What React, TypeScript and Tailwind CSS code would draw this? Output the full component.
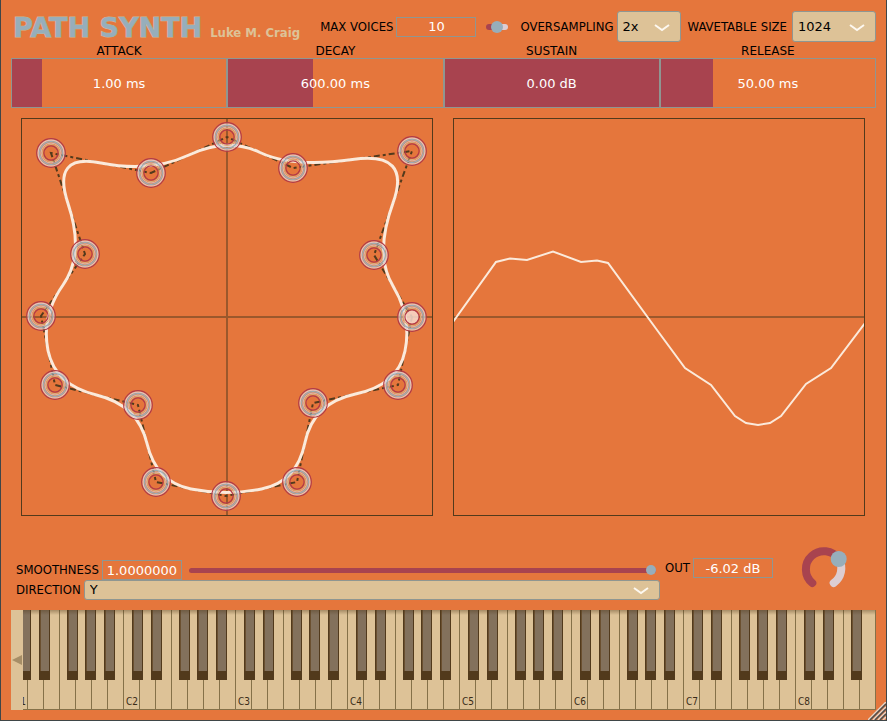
import React, { useState } from "react";
import type { ReactNode } from "react";

type Point = [number, number];

const NODES: Point[] = [
  [391, 199], [353, 137], [391, 33], [272, 50], [206, 19], [130, 55], [30, 35], [64, 136],
  [20, 198], [34, 267], [117, 287], [135, 364], [205, 378], [276, 364], [292, 285], [377, 267],
];

const WAVE =
  "0,204 43,144 57,140.500 74,142 100,133.500 128,144 144,142.500 155,145 204,212 232,250 258,267 282,298 293,305 305,307 317,305 328,298 353,266 378,250 412,205";

const mid = (a: Point, b: Point): Point => [(a[0] + b[0]) / 2, (a[1] + b[1]) / 2];

function smoothPath(points: Point[]) {
  const start = mid(points[points.length - 1], points[0]);
  const parts = points.map((p, i) => {
    const end = mid(p, points[(i + 1) % points.length]);
    return `Q${p[0]} ${p[1]} ${end[0]} ${end[1]}`;
  });
  return `M${start[0]} ${start[1]}${parts.join("")}Z`;
}

const LABEL = "whitespace-nowrap font-['DejaVu_Sans_Condensed','DejaVu_Sans',sans-serif] text-[13px] leading-4 text-black";
const FIELD = "h-5 w-20 shrink-0 border border-[#8f9691] bg-transparent text-center text-[13px] leading-4 text-white outline-none";

function Dropdown({ id, options, className }: { id: string; options: string[]; className: string }) {
  return (
    <div className={`relative ${className}`}>
      <select
        id={id}
        className="block h-full w-full appearance-none rounded-[3px] border border-[#8f9691] bg-[#ddc297] px-[5px] text-[13px] leading-4 text-black outline-none"
      >
        {options.map((o) => (
          <option key={o}>{o}</option>
        ))}
      </select>
      <svg className="pointer-events-none absolute top-1/2 right-[11px] -mt-[3px]" width="16" height="8" viewBox="0 0 16 8">
        <path d="M1 1 L8 6 L15 1" fill="none" stroke="#fdf8f0" strokeWidth="2" />
      </svg>
    </div>
  );
}

function EnvelopeSlider({ label, unit, value, percent }: { label: string; unit: string; value: string; percent: number }) {
  const [amount, setAmount] = useState(percent);
  const id = label.toLowerCase();
  return (
    <div>
      <label htmlFor={id} className="block h-4 text-center text-[12px] leading-[18px] text-black">
        {label}
      </label>
      <div className="relative h-[50px] border border-[#8f9691]">
        <div className="h-full bg-[#a8434f]" style={{ width: `${amount}%` }} />
        <input
          id={id}
          type="range"
          value={amount}
          step="any"
          onChange={(e) => setAmount(Number(e.target.value))}
          className="absolute inset-0 h-full w-full opacity-0"
        />
        <span className="pointer-events-none absolute inset-0 flex items-center justify-center pt-[2px] text-[13px] leading-4 text-white">
          {value} {unit}
        </span>
      </div>
    </div>
  );
}

function Plot({ label, children }: { label: string; children: ReactNode }) {
  return (
    <svg viewBox="0 0 412 398" className="block w-full" role="img" aria-label={label}>
      {children}
      <rect x="0.500" y="0.500" width="411" height="397" fill="none" stroke="#523a1c" shapeRendering="crispEdges" />
    </svg>
  );
}

function Node({ x, y, selected }: { x: number; y: number; selected: boolean }) {
  return (
    <g transform={`translate(${x} ${y})`} fill="none">
      {selected && <circle r="7" fill="#f8dccf" fillOpacity="0.850" />}
      <circle r="10.700" stroke="#ddc297" strokeWidth="5" strokeOpacity="0.150" />
      <circle r="14.300" stroke="#b23b48" strokeWidth="1.200" />
      <circle r="12.900" stroke="#ddccd0" strokeWidth="1.200" strokeOpacity="0.900" />
      <circle r="11.300" stroke="#97aebb" strokeWidth="1.200" />
      <circle r="9.900" stroke="#ddccd0" strokeWidth="0.900" strokeOpacity="0.800" />
      <circle r="8.600" stroke="#ddab74" strokeWidth="1" />
      <circle r="7.100" stroke="#b23b48" strokeWidth="1.200" />
    </g>
  );
}

function PathEditor() {
  return (
    <Plot label="Path">
      <path d="M206 0V398M0 199H412" stroke="#523a1c" strokeOpacity="0.500" strokeWidth="2" />
      <polygon
        points={NODES.map((p) => p.join(",")).join(" ")}
        fill="none"
        stroke="#523a1c"
        strokeWidth="2"
        strokeDasharray="3 3 6 3"
      />
      <path d={smoothPath(NODES)} fill="none" stroke="#fbeadb" strokeWidth="3" />
      {NODES.map(([x, y], i) => (
        <Node key={i} x={x} y={y} selected={i === 0} />
      ))}
    </Plot>
  );
}

function WaveView() {
  return (
    <Plot label="Waveform">
      <path d="M0 199H412" stroke="#523a1c" strokeOpacity="0.500" strokeWidth="2" />
      <polyline points={WAVE} fill="none" stroke="#fbeadb" strokeWidth="2" />
    </Plot>
  );
}

function Knob() {
  return (
    <div className="relative h-[46px] w-12">
      <svg viewBox="0 0 48 46" className="block h-full w-full" fill="none" strokeWidth="8" strokeLinecap="round">
        <path d="M37.700 14 A18 18 0 0 1 32.700 38" stroke="#dccdd2" />
        <path d="M11.300 38 A18 18 0 1 1 37.700 14" stroke="#a8434f" />
        <circle cx="37.700" cy="14" r="8" fill="#97aebb" />
      </svg>
      <input type="range" aria-label="Output level" defaultValue={70} className="absolute inset-0 h-full w-full opacity-0" />
    </div>
  );
}

const BLACK_OFFSETS: Record<number, string> = {
  0: "left-[8px]",
  1: "left-[11px]",
  3: "left-[7px]",
  4: "left-[9px]",
  5: "left-[12px]",
};

function Keyboard() {
  return (
    <div className="relative flex h-[100px] overflow-hidden border-r border-[#857149] bg-[#ddc297]">
      {Array.from({ length: 54 }, (_, i) => {
        const note = i % 7;
        return (
          <div key={i} className="relative flex-1 border-b border-l border-[#857149]">
            {note === 0 && (
              <span className="absolute bottom-0 left-[2px] font-['DejaVu_Sans_Condensed','DejaVu_Sans',sans-serif] text-[10px] leading-[14px] text-[#3a2c18]">
                C{i / 7 + 1}
              </span>
            )}
            {BLACK_OFFSETS[note] && i < 53 && (
              <button
                type="button"
                aria-label="Black key"
                className={`absolute top-0 z-10 h-[70px] w-[11px] border-x border-b-[9px] border-[#523a1c] bg-[#83715c] shadow-[inset_1px_0_#6b5030] ${BLACK_OFFSETS[note]}`}
              />
            )}
          </div>
        );
      })}
      <div className="pointer-events-none absolute inset-x-0 top-0 z-20 h-[5px] bg-linear-to-b from-[#523a1c]/40 to-transparent" />
      <button type="button" aria-label="Lower octave" className="absolute inset-y-0 left-0 z-30 flex w-3 items-center justify-center bg-[#ddc297]">
        <svg width="10" height="10" viewBox="0 0 10 10">
          <path d="M0 5L10 0V10Z" fill="#a68e67" />
        </svg>
      </button>
    </div>
  );
}

export default function App() {
  return (
    <main className="relative border-x border-b border-[#3f4648] bg-[#e5763c] px-[10px] pt-[11px] pb-[10px] font-['DejaVu_Sans',sans-serif]">
      <header className="flex h-[31px] items-center justify-between pl-[2px]">
        <div className="flex items-baseline gap-2 pt-[2px] whitespace-nowrap">
          <h1 className="text-[27px] leading-8 font-bold text-[#97aebb] [-webkit-text-stroke:1px_#c9b899] [paint-order:stroke]">PATH SYNTH</h1>
          <span className="font-['DejaVu_Sans_Condensed','DejaVu_Sans',sans-serif] text-[13px] leading-4 font-bold text-[#ddc297]">
            Luke M. Craig
          </span>
        </div>
        <div className="flex items-center">
          <label htmlFor="voices" className={LABEL}>MAX VOICES</label>
          <input id="voices" defaultValue="10" className={`${FIELD} ml-[3px]`} />
          <input
            type="range"
            aria-label="Voice mode"
            defaultValue={45}
            className="mr-3 ml-[10px] h-3 w-[22px] appearance-none bg-transparent [&::-webkit-slider-runnable-track]:h-[6px] [&::-webkit-slider-runnable-track]:rounded-full [&::-webkit-slider-runnable-track]:bg-linear-to-r [&::-webkit-slider-runnable-track]:from-[#a8434f] [&::-webkit-slider-runnable-track]:from-50% [&::-webkit-slider-runnable-track]:to-[#dccdd2] [&::-webkit-slider-runnable-track]:to-50% [&::-webkit-slider-thumb]:-mt-[3px] [&::-webkit-slider-thumb]:size-3 [&::-webkit-slider-thumb]:appearance-none [&::-webkit-slider-thumb]:rounded-full [&::-webkit-slider-thumb]:bg-[#97aebb]"
          />
          <label htmlFor="oversampling" className={LABEL}>OVERSAMPLING</label>
          <Dropdown id="oversampling" options={["2x", "4x", "8x"]} className="mr-[7px] ml-[3px] h-[31px] w-16" />
          <label htmlFor="size" className={LABEL}>WAVETABLE SIZE</label>
          <Dropdown id="size" options={["1024", "2048", "4096"]} className="ml-[5px] h-[31px] w-[84px]" />
        </div>
      </header>

      <section className="grid grid-cols-4">
        <EnvelopeSlider label="ATTACK" value="1.00" unit="ms" percent={13.9} />
        <EnvelopeSlider label="DECAY" value="600.00" unit="ms" percent={39.7} />
        <EnvelopeSlider label="SUSTAIN" value="0.00" unit="dB" percent={100} />
        <EnvelopeSlider label="RELEASE" value="50.00" unit="ms" percent={24.3} />
      </section>

      <section className="mt-[10px] mr-[11px] ml-[10px] grid grid-cols-2 gap-5">
        <PathEditor />
        <WaveView />
      </section>

      <section className="mt-[28px] flex h-[56px] pl-[5px]">
        <div className="w-[644px] pt-4">
          <div className="flex h-5 items-center">
            <label htmlFor="smoothness" className={LABEL}>SMOOTHNESS</label>
            <input id="smoothness" defaultValue="1.0000000" className={`${FIELD} ml-[3px]`} />
            <input
              type="range"
              aria-label="Smoothness amount"
              defaultValue={100}
              className="mr-1 ml-[7px] h-[10px] min-w-0 flex-1 appearance-none bg-transparent [&::-webkit-slider-runnable-track]:h-[5px] [&::-webkit-slider-runnable-track]:rounded-full [&::-webkit-slider-runnable-track]:bg-[#a8434f] [&::-webkit-slider-thumb]:-mt-[3px] [&::-webkit-slider-thumb]:size-[10px] [&::-webkit-slider-thumb]:appearance-none [&::-webkit-slider-thumb]:rounded-full [&::-webkit-slider-thumb]:bg-[#97aebb]"
            />
          </div>
          <div className="flex h-5 items-center">
            <label htmlFor="direction" className={LABEL}>DIRECTION</label>
            <Dropdown id="direction" options={["Y", "X"]} className="ml-[3px] h-5 flex-1" />
          </div>
        </div>
        <div className="ml-[5px] flex h-12 flex-1 items-center">
          <label htmlFor="out" className={LABEL}>OUT</label>
          <input id="out" defaultValue="-6.02 dB" className={`${FIELD} ml-[3px]`} />
          <div className="mr-[27px] ml-auto">
            <Knob />
          </div>
        </div>
      </section>

      <section className="mt-[10px]">
        <Keyboard />
      </section>

      <svg className="pointer-events-none absolute right-0 bottom-0 z-30" width="18" height="18" viewBox="0 0 18 18" strokeWidth="1.500">
        <path d="M0 18L18 0M5 18L18 5M10 18L18 10M15 18L18 15" stroke="#e2d5cb" />
        <path d="M2 18L18 2M7 18L18 7M12 18L18 12" stroke="#4a4f50" />
      </svg>
    </main>
  );
}
